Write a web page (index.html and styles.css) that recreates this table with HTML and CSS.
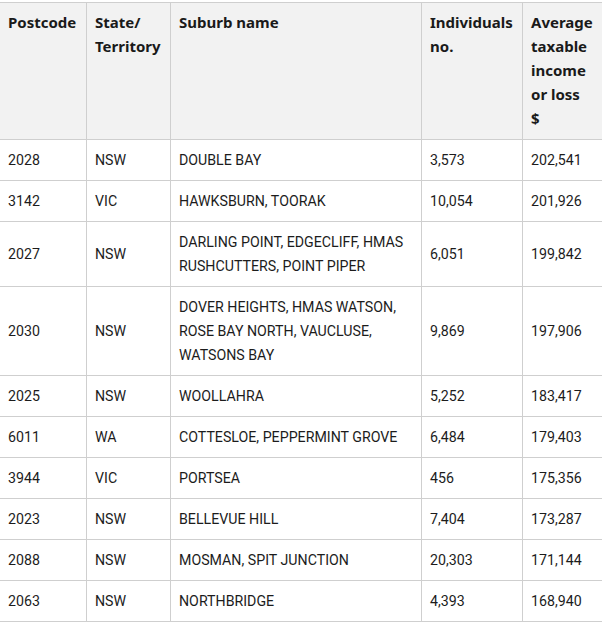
FILE: index.html
```html
<!DOCTYPE html>
<html lang="en">
<head>
<meta charset="utf-8">
<title>Postcodes</title>
<link rel="stylesheet" href="styles.css">
</head>
<body>
<div class="frame">
<table class="data">
  <colgroup>
    <col class="c1"><col class="c2"><col class="c3"><col class="c4"><col class="c5">
  </colgroup>
  <thead>
    <tr>
      <th>Postcode</th>
      <th>State/<br>Territory</th>
      <th>Suburb name</th>
      <th>Individuals<br>no.</th>
      <th>Average<br>taxable<br>income<br>or loss<br>$</th>
    </tr>
  </thead>
  <tbody>
    <tr><td>2028</td><td>NSW</td><td>DOUBLE BAY</td><td>3,573</td><td>202,541</td></tr>
    <tr><td>3142</td><td>VIC</td><td>HAWKSBURN, TOORAK</td><td>10,054</td><td>201,926</td></tr>
    <tr><td>2027</td><td>NSW</td><td>DARLING POINT, EDGECLIFF, HMAS<br>RUSHCUTTERS, POINT PIPER</td><td>6,051</td><td>199,842</td></tr>
    <tr><td>2030</td><td>NSW</td><td>DOVER HEIGHTS, HMAS WATSON,<br>ROSE BAY NORTH, VAUCLUSE,<br>WATSONS BAY</td><td>9,869</td><td>197,906</td></tr>
    <tr><td>2025</td><td>NSW</td><td>WOOLLAHRA</td><td>5,252</td><td>183,417</td></tr>
    <tr><td>6011</td><td>WA</td><td>COTTESLOE, PEPPERMINT GROVE</td><td>6,484</td><td>179,403</td></tr>
    <tr><td>3944</td><td>VIC</td><td>PORTSEA</td><td>456</td><td>175,356</td></tr>
    <tr><td>2023</td><td>NSW</td><td>BELLEVUE HILL</td><td>7,404</td><td>173,287</td></tr>
    <tr><td>2088</td><td>NSW</td><td>MOSMAN, SPIT JUNCTION</td><td>20,303</td><td>171,144</td></tr>
    <tr><td>2063</td><td>NSW</td><td>NORTHBRIDGE</td><td>4,393</td><td>168,940</td></tr>
  </tbody>
</table>
</div>
</body>
</html>
```
FILE: styles.css
```css
html, body {
  margin: 0;
  padding: 0;
  background: #fff;
}
.frame {
  width: 602px;
  height: 622px;
  padding-top: 2px;
  box-sizing: border-box;
  overflow: hidden;
}
.data {
  border-collapse: collapse;
  table-layout: fixed;
  width: 660px;
  margin-left: -1px;
  color: #1c1c1c;
}
.c1 { width: 87px; }
.c2 { width: 84px; }
.c3 { width: 251px; }
.c4 { width: 101px; }
.c5 { width: 137px; }
.data th, .data td {
  border: 1px solid #cfcfcf;
  padding: 8px;
  line-height: 24px;
  text-align: left;
  vertical-align: middle;
}
.data th {
  background: #f2f2f2;
  font-family: "Noto Sans", sans-serif;
  font-weight: 700;
  font-size: 15px;
  vertical-align: top;
  padding-top: 7px;
  padding-bottom: 9px;
  color: #1a1a1a;
}
.data td {
  font-family: "Roboto", sans-serif;
  font-size: 14.2px;
  font-weight: 400;
}
```
